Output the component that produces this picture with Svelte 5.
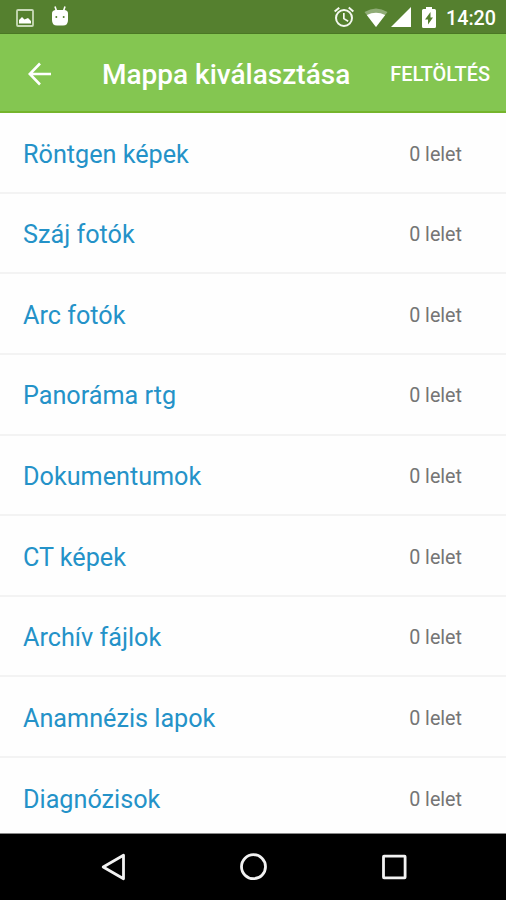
<script lang="ts">
  type Folder = { name: string; count: number };

  const folders: Folder[] = [
    { name: "Röntgen képek", count: 0 },
    { name: "Száj fotók", count: 0 },
    { name: "Arc fotók", count: 0 },
    { name: "Panoráma rtg", count: 0 },
    { name: "Dokumentumok", count: 0 },
    { name: "CT képek", count: 0 },
    { name: "Archív fájlok", count: 0 },
    { name: "Anamnézis lapok", count: 0 },
    { name: "Diagnózisok", count: 0 },
  ];
</script>

<div class="screen">
  <div class="status-bar">
    <svg class="picture" width="18" height="18" viewBox="0 0 18 18">
      <rect x="1" y="1" width="16" height="16" rx="1" fill="none" stroke="#c9dab9" stroke-width="1.8" />
      <path d="M3 14.500V11L6 8L8.500 10.500L12 9L15 12V14.500Z" fill="#fff" />
    </svg>
    <svg class="droid" width="18" height="20" viewBox="0 0 18 20">
      <path d="M4 0.500L5.500 5M14 0.500L12.500 5" stroke="#fff" stroke-width="1.600" />
      <path d="M1 7.500Q1 4 5 4H13Q17 4 17 7.500V14Q17 19.500 12 19.500H6Q1 19.500 1 14Z" fill="#fff" />
      <circle cx="5.300" cy="11" r="1" fill="#55802f" />
      <circle cx="12.700" cy="11" r="1" fill="#55802f" />
    </svg>
    <svg class="alarm" width="24" height="24" viewBox="0 0 24 24" fill="#f4f8f0">
      <path d="M22 5.700l-4.600-3.900-1.300 1.500 4.600 3.900L22 5.700zM7.900 3.400L6.600 1.900 2 5.700l1.300 1.500 4.600-3.800zM12.700 8H11v6l4.700 2.900.9-1.400-3.900-2.300V8zM12 4a9 9 0 1 0 0 18 9 9 0 0 0 0-18zm0 16a7 7 0 1 1 0-14 7 7 0 0 1 0 14z" />
    </svg>
    <svg class="wifi" width="24" height="19" viewBox="0 0 24 19">
      <path d="M0.500 4Q12 -3 23.500 4L12 19Z" fill="#fff" fill-opacity="0.35" />
      <path d="M2.800 7Q12 2.500 21.200 7L12 19Z" fill="#fff" />
    </svg>
    <svg class="signal" width="20" height="20" viewBox="0 0 20 20">
      <path d="M20 0V20H0Z" fill="#fff" />
    </svg>
    <svg class="battery" width="14" height="21" viewBox="0 0 14 21">
      <path d="M4 0H10V2H12.500Q14 2 14 3.500V19.500Q14 21 12.500 21H1.500Q0 21 0 19.500V3.500Q0 2 1.500 2H4Z" fill="#fff" />
      <path d="M8.500 5L3 12.500H6V17.500L11 10.500H8.500Z" fill="#55802f" />
    </svg>
    <span class="clock">14:20</span>
  </div>

  <header class="app-bar">
    <svg class="back" width="24" height="24" viewBox="0 0 24 24">
      <path d="M23 12H2M12 1.500L1.800 12L12 22.500" fill="none" stroke="#fff" stroke-width="2.600" />
    </svg>
    <h1>Mappa kiválasztása</h1>
    <button>FELTÖLTÉS</button>
  </header>

  <ul class="folders">
    {#each folders as folder}
      <li>
        <span class="name">{folder.name}</span>
        <span class="count">{folder.count} lelet</span>
      </li>
    {/each}
  </ul>

  <nav class="nav-bar">
    <svg width="28" height="30" viewBox="0 0 28 30">
      <path d="M23.500 3.200V26.800L3.200 15Z" />
    </svg>
    <svg width="30" height="30" viewBox="0 0 30 30">
      <circle cx="14.500" cy="14.700" r="12" />
    </svg>
    <svg width="28" height="30" viewBox="0 0 28 30">
      <rect x="3.500" y="4.200" width="21.600" height="21.600" rx="0.500" />
    </svg>
  </nav>
</div>

<style>
  :global(body) {
    margin: 0;
    background: #fefefe;
  }
  .screen {
    display: flex;
    flex-direction: column;
    width: 506px;
    height: 900px;
    overflow: hidden;
    font-family: Roboto, sans-serif;
    background: #fefefe;
  }
  .status-bar {
    display: flex;
    flex: none;
    align-items: flex-start;
    box-sizing: border-box;
    height: 34px;
    padding-left: 16px;
    background: #55802f;
    border-bottom: 1px solid #4a7724;
  }
  .status-bar svg {
    flex: none;
  }
  .picture {
    margin-top: 9px;
  }
  .droid {
    margin: 6px 0 0 17px;
  }
  .alarm {
    margin: 5px 0 0 auto;
  }
  .wifi {
    margin: 8px 0 0 8px;
  }
  .signal {
    margin: 7px 0 0 3px;
  }
  .battery {
    margin: 7px 0 0 11px;
  }
  .clock {
    width: 50px;
    margin: 7px 10px 0 10px;
    color: #fff;
    font-size: 19.7px;
    font-weight: 500;
    line-height: 24px;
    white-space: nowrap;
  }
  .app-bar {
    display: flex;
    flex: none;
    align-items: center;
    box-sizing: border-box;
    height: 79px;
    padding: 2px 16px 0 28px;
    background: #84c651;
    border-bottom: 2px solid #75b52c;
    color: #fff;
  }
  .back {
    flex: none;
  }
  h1 {
    margin: 2px auto 0 50px;
    font-size: 28px;
    font-weight: 500;
    line-height: 36px;
    white-space: nowrap;
  }
  button {
    padding: 2px 0 0;
    border: 0;
    background: none;
    color: #fff;
    font: 500 19.9px/24px Roboto, sans-serif;
    white-space: nowrap;
  }
  .folders {
    flex: 1;
    min-height: 0;
    margin: 0;
    padding: 0;
    overflow: hidden;
    list-style: none;
  }
  li {
    display: flex;
    align-items: center;
    justify-content: space-between;
    box-sizing: border-box;
    height: 80.64px;
    padding: 3px 44px 0 23px;
    border-bottom: 2px solid #f3f3f3;
  }
  .name {
    padding-top: 1.5px;
    color: #2492c8;
    font-size: 25.2px;
    line-height: 32px;
  }
  .count {
    padding-top: 1.5px;
    color: #757575;
    font-size: 19.7px;
    line-height: 26px;
  }
  .nav-bar {
    display: flex;
    flex: none;
    align-items: center;
    justify-content: space-between;
    box-sizing: border-box;
    height: 67px;
    padding: 0 98px 0 100px;
    background: #000;
    border-top: 1px solid #888;
  }
  .nav-bar svg {
    fill: none;
    stroke: #f2f2f2;
    stroke-width: 2.8;
    stroke-linejoin: round;
  }
</style>
